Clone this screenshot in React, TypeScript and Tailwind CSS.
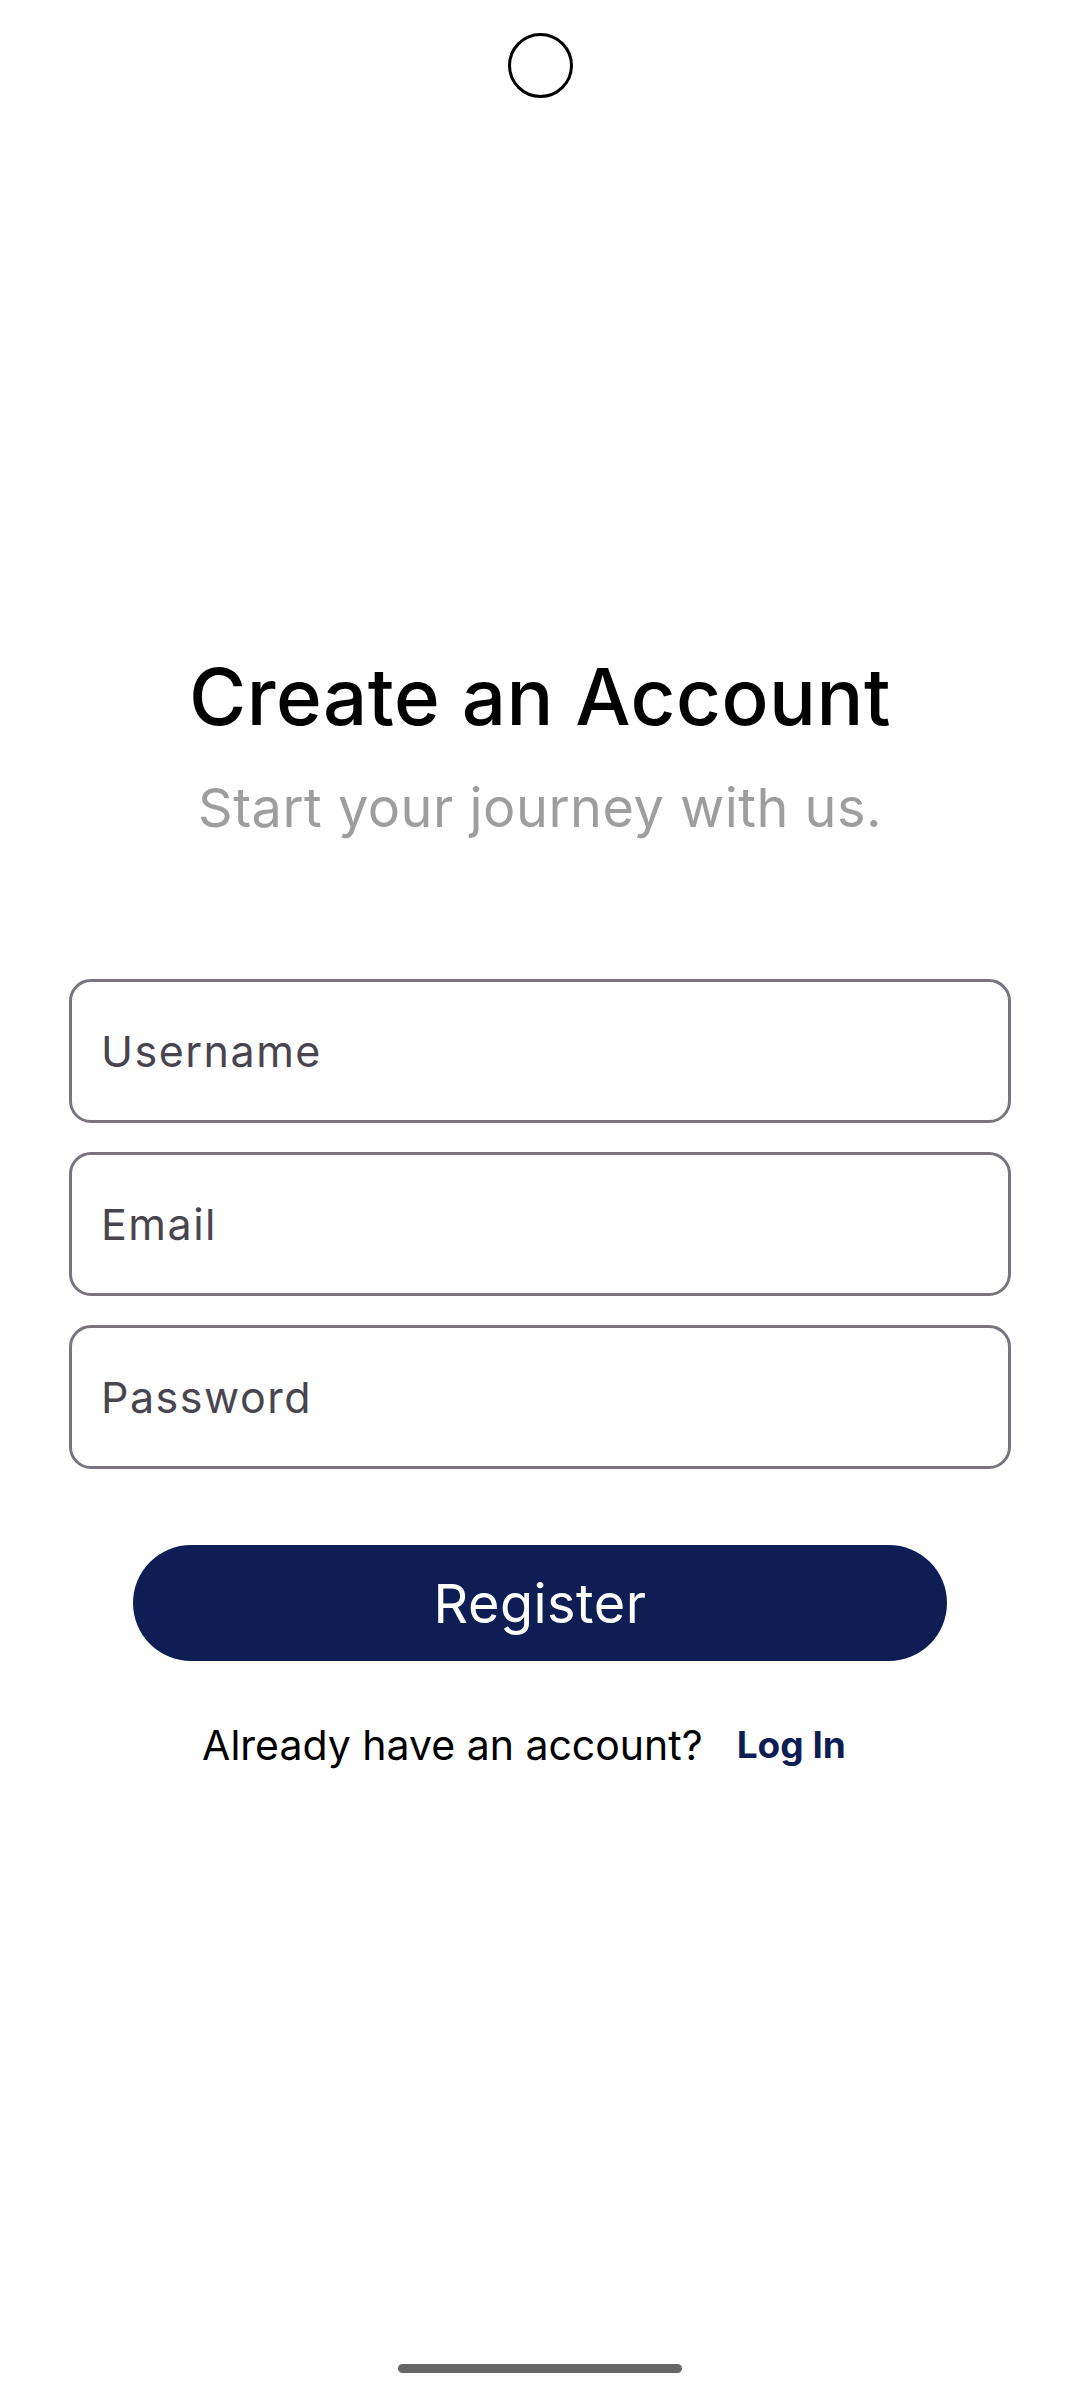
import React, { useState } from 'react';

const font = { fontFamily: 'Inter, "Noto Sans", sans-serif' };

const Field: React.FC<{ placeholder: string; type?: string }> = ({ placeholder, type = 'text' }) => {
  const [value, setValue] = useState('');
  return (
    <div className="h-[144px] rounded-[22px] border-[3px] border-[#79747e] flex items-center px-[29px]">
      <input
        type={type}
        value={value}
        onChange={(e) => setValue(e.target.value)}
        placeholder={placeholder}
        className="w-full bg-transparent outline-none text-[43px] tracking-[1.5px] text-[#1c1b1f] placeholder:text-[#49454f]"
        style={font}
      />
    </div>
  );
};

export default function App() {
  return (
    <div className="w-[1080px] h-[2400px] bg-white flex flex-col" style={font}>
      {/* camera cutout */}
      <div className="pt-[33px] flex justify-center">
        <div className="w-[65px] h-[65px] rounded-full border-[3px] border-black" />
      </div>

      <h1 className="mt-[555px] text-center text-[78px] leading-[88px] font-medium text-black tracking-[0.5px]">
        Create an Account
      </h1>
      <p className="mt-[35px] text-center text-[54px] leading-[64px] text-[#9e9e9e] tracking-[0.5px]">
        Start your journey with us.
      </p>

      <div className="mt-[139px] mx-[69px] flex flex-col gap-[29px]">
        <Field placeholder="Username" />
        <Field placeholder="Email" type="email" />
        <Field placeholder="Password" type="password" />
      </div>

      <div className="mt-[76px] px-[133px]">
        <button className="w-full h-[116px] rounded-full bg-[#0e1e54] text-white text-[54px] tracking-[0.5px]">
          Register
        </button>
      </div>

      <div className="mt-[59px] pr-[32px] flex justify-center items-center gap-[34px] leading-[50px]">
        <span className="text-black text-[41px]">Already have an account?</span>
        <button className="font-bold text-[#0e1e54] text-[37px]">Log In</button>
      </div>

      {/* gesture bar */}
      <div className="mt-auto pb-[27px] flex justify-center">
        <div className="w-[284px] h-[9px] rounded-full bg-[#666666]" />
      </div>
    </div>
  );
}
